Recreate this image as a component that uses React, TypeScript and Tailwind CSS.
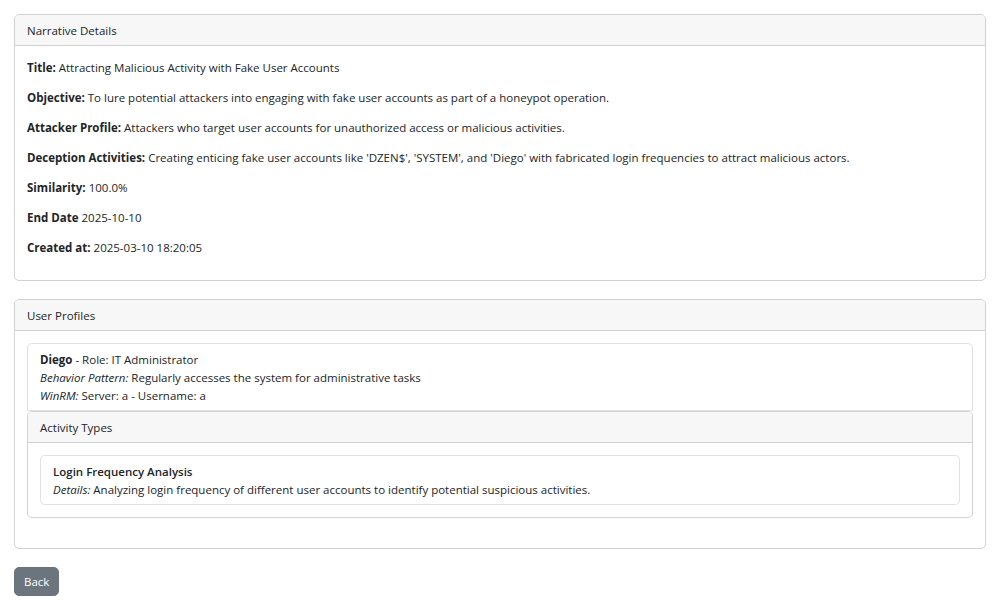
import React from "react";

const Row = ({ label, value }: { label: string; value: string }) => (
  <p className="mb-[12px]">
    <strong className="font-bold">{label}</strong> {value}
  </p>
);

export default function App() {
  return (
    <div className="min-h-[600px] bg-white pt-[14px] pl-[14px] text-[11.5px] leading-[18px] text-[#212529] font-['Segoe_UI','Open_Sans',sans-serif]">
      <div className="w-[972px]">
        <div className="mb-[18px] rounded-[5px] border border-[#d2d2d2] bg-white">
          <div className="rounded-t-[4px] border-b border-[#d2d2d2] bg-[#f7f7f7] px-[12px] pt-[7px] pb-[5px]">
            Narrative Details
          </div>
          <div className="px-[12px] pt-[13px] pb-[11px]">
            <Row label="Title:" value="Attracting Malicious Activity with Fake User Accounts" />
            <Row
              label="Objective:"
              value="To lure potential attackers into engaging with fake user accounts as part of a honeypot operation."
            />
            <Row
              label="Attacker Profile:"
              value="Attackers who target user accounts for unauthorized access or malicious activities."
            />
            <Row
              label="Deception Activities:"
              value="Creating enticing fake user accounts like 'DZEN$', 'SYSTEM', and 'Diego' with fabricated login frequencies to attract malicious actors."
            />
            <Row label="Similarity:" value="100.0%" />
            <Row label="End Date" value="2025-10-10" />
            <Row label="Created at:" value="2025-03-10 18:20:05" />
          </div>
        </div>

        <div className="mb-[18px] rounded-[5px] border border-[#d2d2d2] bg-white">
          <div className="rounded-t-[4px] border-b border-[#d2d2d2] bg-[#f7f7f7] px-[12px] pt-[7px] pb-[5px]">
            User Profiles
          </div>
          <div className="p-[12px]">
            <div className="rounded-t-[5px] border border-[#dee2e6] px-[12px] pt-[7px] pb-[5px]">
              <div>
                <strong className="font-bold">Diego</strong> - Role: IT Administrator
              </div>
              <div>
                <em>Behavior Pattern:</em> Regularly accesses the system for administrative tasks
              </div>
              <div>
                <em>WinRM:</em> Server: a - Username: a
              </div>
            </div>
            <div className="mb-[18px] rounded-[5px] border border-[#d2d2d2]">
              <div className="rounded-t-[4px] border-b border-[#d2d2d2] bg-[#f7f7f7] px-[12px] pt-[7px] pb-[5px]">
                Activity Types
              </div>
              <div className="p-[12px]">
                <div className="rounded-[5px] border border-[#dee2e6] px-[12px] pt-[7px] pb-[5px]">
                  <div className="font-semibold">Login Frequency Analysis</div>
                  <div>
                    <em>Details:</em> Analyzing login frequency of different user accounts to identify potential suspicious activities.
                  </div>
                </div>
              </div>
            </div>
          </div>
        </div>

        <button className="rounded-[5px] border border-[#6c757d] bg-[#6c757d] px-[9px] pt-[5px] pb-[4px] text-[11.5px] leading-[18px] text-white">
          Back
        </button>
      </div>
    </div>
  );
}
